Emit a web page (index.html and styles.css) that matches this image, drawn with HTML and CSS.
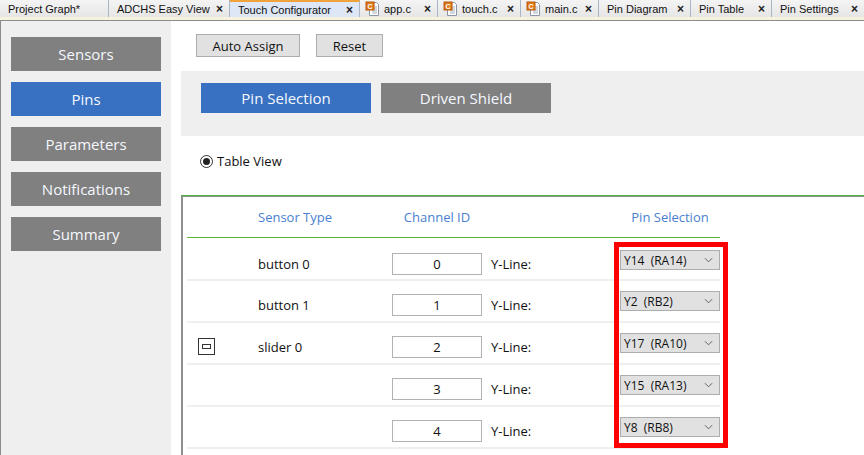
FILE: index.html
```html
<!DOCTYPE html>
<html>
<head>
<meta charset="utf-8">
<link rel="stylesheet" href="styles.css">
</head>
<body>
<div class="tabbar">
  <div class="tab w1"><span class="tl">Project Graph*</span></div>
  <div class="tab w2"><span class="tl">ADCHS Easy View</span><span class="x">×</span></div>
  <div class="tab w3 active"><span class="tl">Touch Configurator</span><span class="x">×</span></div>
  <div class="tab w4"><svg class="ficon" viewBox="0 0 16 16"><path d="M4.5 1.5h7l2 2v11h-9z" fill="#fff" stroke="#8a96a6"/><path d="M7 6h5M7 8h5M7 10h5M7 12h5" stroke="#a8b2c0"/><rect x="1" y="1" width="8" height="8" fill="#e07b1a" stroke="#b85a08"/><text x="5" y="8" font-size="7" font-family="Liberation Sans" font-weight="bold" fill="#fff" text-anchor="middle">C</text></svg><span class="tl">app.c</span><span class="x">×</span></div>
  <div class="tab w5"><svg class="ficon" viewBox="0 0 16 16"><path d="M4.5 1.5h7l2 2v11h-9z" fill="#fff" stroke="#8a96a6"/><path d="M7 6h5M7 8h5M7 10h5M7 12h5" stroke="#a8b2c0"/><rect x="1" y="1" width="8" height="8" fill="#e07b1a" stroke="#b85a08"/><text x="5" y="8" font-size="7" font-family="Liberation Sans" font-weight="bold" fill="#fff" text-anchor="middle">C</text></svg><span class="tl">touch.c</span><span class="x">×</span></div>
  <div class="tab w6"><svg class="ficon" viewBox="0 0 16 16"><path d="M4.5 1.5h7l2 2v11h-9z" fill="#fff" stroke="#8a96a6"/><path d="M7 6h5M7 8h5M7 10h5M7 12h5" stroke="#a8b2c0"/><rect x="1" y="1" width="8" height="8" fill="#e07b1a" stroke="#b85a08"/><text x="5" y="8" font-size="7" font-family="Liberation Sans" font-weight="bold" fill="#fff" text-anchor="middle">C</text></svg><span class="tl">main.c</span><span class="x">×</span></div>
  <div class="tab w7"><span class="tl">Pin Diagram</span><span class="x">×</span></div>
  <div class="tab w8"><span class="tl">Pin Table</span><span class="x">×</span></div>
  <div class="tab w9"><span class="tl">Pin Settings</span><span class="x">×</span></div>
</div>
<div class="frame">
  <nav class="sidebar">
    <div class="navbtn">Sensors</div>
    <div class="navbtn on">Pins</div>
    <div class="navbtn">Parameters</div>
    <div class="navbtn">Notifications</div>
    <div class="navbtn">Summary</div>
  </nav>
  <main class="main">
    <div class="toolbar">
      <button class="btn auto">Auto Assign</button>
      <button class="btn reset">Reset</button>
    </div>
    <div class="panel">
      <div class="pbtn on">Pin Selection</div>
      <div class="pbtn">Driven Shield</div>
    </div>
    <div class="radio-row">
      <span class="radio"><span class="dot"></span></span>
      <span>Table View</span>
    </div>
    <div class="tablebox">
      <div class="tableinner">
        <div class="grid head">
          <div></div>
          <div class="hc">Sensor Type</div>
          <div class="hc center">Channel ID</div>
          <div></div>
          <div class="hc center">Pin Selection</div>
        </div>
        <div class="grid row first">
          <div></div>
          <div class="name">button 0</div>
          <div class="inp">0</div>
          <div class="yl">Y-Line:</div>
          <div class="sel"><span>Y14&nbsp;&nbsp;(RA14)</span><svg class="chev" viewBox="0 0 10 6"><path d="M1 1l4 4 4-4" fill="none" stroke="#555" stroke-width="1"/></svg></div>
        </div>
        <div class="grid row">
          <div></div>
          <div class="name">button 1</div>
          <div class="inp">1</div>
          <div class="yl">Y-Line:</div>
          <div class="sel"><span>Y2&nbsp;&nbsp;(RB2)</span><svg class="chev" viewBox="0 0 10 6"><path d="M1 1l4 4 4-4" fill="none" stroke="#555" stroke-width="1"/></svg></div>
        </div>
        <div class="grid row">
          <div><span class="collapse"><span class="bar"></span></span></div>
          <div class="name">slider 0</div>
          <div class="inp">2</div>
          <div class="yl">Y-Line:</div>
          <div class="sel"><span>Y17&nbsp;&nbsp;(RA10)</span><svg class="chev" viewBox="0 0 10 6"><path d="M1 1l4 4 4-4" fill="none" stroke="#555" stroke-width="1"/></svg></div>
        </div>
        <div class="grid row">
          <div></div>
          <div class="name"></div>
          <div class="inp">3</div>
          <div class="yl">Y-Line:</div>
          <div class="sel"><span>Y15&nbsp;&nbsp;(RA13)</span><svg class="chev" viewBox="0 0 10 6"><path d="M1 1l4 4 4-4" fill="none" stroke="#555" stroke-width="1"/></svg></div>
        </div>
        <div class="grid row">
          <div></div>
          <div class="name"></div>
          <div class="inp">4</div>
          <div class="yl">Y-Line:</div>
          <div class="sel"><span>Y8&nbsp;&nbsp;(RB8)</span><svg class="chev" viewBox="0 0 10 6"><path d="M1 1l4 4 4-4" fill="none" stroke="#555" stroke-width="1"/></svg></div>
        </div>
        <div class="highlight"></div>
      </div>
    </div>
  </main>
</div>
</body>
</html>
```
FILE: styles.css
```css
* { box-sizing: border-box; }
html, body { margin: 0; padding: 0; }
body {
  width: 864px;
  height: 455px;
  overflow: hidden;
  background: #fff;
  font-family: "Open Sans", "Noto Sans", sans-serif;
  color: #111;
}

/* tab bar */
.tabbar {
  display: flex;
  height: 20px;
  background: linear-gradient(#f4f4f4, #e6e6e6);
  border-bottom: 3px solid #f6f2de;
}
.tab {
  display: flex;
  align-items: center;
  height: 17px;
  padding: 0 6px 0 8px;
  border-right: 1px solid #a9b6c8;
  font-family: "Liberation Sans", Arial, sans-serif;
  font-size: 11px;
  color: #111;
  white-space: nowrap;
}
.tab .tl { flex: 1; }
.tab .x { font-weight: bold; font-size: 12px; color: #222; line-height: 1; }
.tab.active {
  background: #dde7f6;
  border-top: 2px solid #f2a23a;
}
.ficon { width: 16px; height: 16px; margin: 0 3px 0 -3px; flex: none; }
.w1 { width: 109px; }
.w2 { width: 121px; }
.w3 { width: 130px; }
.w4 { width: 78px; }
.w5 { width: 83px; }
.w6 { width: 78px; }
.w7 { width: 92px; }
.w8 { width: 81px; }
.w9 { width: 92px; border-right: none; }

/* frame */
.frame {
  display: flex;
  height: 435px;
  border-top: 1px solid #8c8c8c;
  border-left: 1px solid #8c8c8c;
}
.sidebar {
  width: 170px;
  flex: none;
  background: #efefef;
  padding: 16px 0 0 10px;
  display: flex;
  flex-direction: column;
  gap: 11px;
}
.navbtn {
  width: 150px;
  height: 34px;
  background: #808080;
  color: #f6f8ff;
  font-size: 15px;
  display: flex;
  align-items: center;
  justify-content: center;
  padding-bottom: 1px;
}
.navbtn.on { background: #3871c1; }

.main { flex: 1; min-width: 0; }

.toolbar {
  display: flex;
  gap: 16px;
  padding: 13px 0 0 25px;
}
.btn {
  height: 23px;
  background: #e1e1e1;
  border: 1px solid #adadad;
  font-family: "Open Sans", sans-serif;
  font-size: 13px;
  color: #111;
  padding: 0;
  display: flex;
  align-items: center;
  justify-content: center;
}
.btn.auto { width: 104px; }
.btn.reset { width: 67px; }

.panel {
  margin: 14px 0 0 10px;
  height: 65px;
  background: #efefef;
  padding: 12px 0 0 20px;
  display: flex;
  gap: 10px;
}
.pbtn {
  width: 170px;
  height: 30px;
  background: #808080;
  color: #f6f8ff;
  font-size: 15px;
  display: flex;
  align-items: center;
  justify-content: center;
  padding-bottom: 1px;
}
.pbtn.on { background: #3871c1; }

.radio-row {
  display: flex;
  align-items: center;
  gap: 4px;
  height: 20px;
  margin: 15px 0 0 29px;
  font-size: 13px;
}
.radio {
  width: 13px;
  height: 13px;
  border: 1px solid #333;
  border-radius: 50%;
  display: flex;
  align-items: center;
  justify-content: center;
  background: #fff;
}
.radio .dot { width: 7px; height: 7px; border-radius: 50%; background: #222; }

.tablebox {
  margin: 24px 0 0 10px;
  border-top: 1px solid #4cb33c;
  height: 270px;
}
.tableinner {
  position: relative;
  border-top: 1px solid #8f8f8f;
  border-left: 2px solid #8f8f8f;
  height: 100%;
  padding-left: 4px;
}
.grid {
  display: grid;
  grid-template-columns: 71px 134px 99px 129px 100px;
  width: 533px;
  align-items: center;
}
.head {
  height: 41px;
  border-bottom: 1px solid #5db533;
  font-size: 13px;
  color: #4a7fd0;
  align-items: center;
}
.hc.center { text-align: center; }
.head .hc:nth-child(3) { width: 90px; }
.row {
  height: 42px;
  padding-top: 13px;
  border-bottom: 2px solid #efefef;
  align-items: start;
  font-size: 13px;
}
.row.first { height: 43px; padding-top: 15px; }
.name { line-height: 22px; }
.inp {
  width: 90px;
  height: 22px;
  border: 1px solid #b2b2b2;
  text-align: center;
  line-height: 20px;
  font-size: 13px;
}
.yl { line-height: 22px; }
.sel {
  margin-top: -3px;
  width: 100px;
  height: 20px;
  background: #e1e1e1;
  border: 1px solid #adadad;
  display: flex;
  align-items: center;
  justify-content: space-between;
  padding: 0 6px 0 3px;
  font-size: 12px;
}
.chev { width: 9px; height: 6px; }
.collapse {
  margin: 2px 0 0 11px;
  width: 17px;
  height: 17px;
  border: 1px solid #333;
  display: flex;
  align-items: center;
  justify-content: center;
  background: #fff;
}
.collapse .bar { width: 9px; height: 5px; border: 1px solid #333; }

.highlight {
  position: absolute;
  left: 431px;
  top: 45px;
  width: 114px;
  height: 206px;
  border: 5px solid #f00;
  pointer-events: none;
}
```
